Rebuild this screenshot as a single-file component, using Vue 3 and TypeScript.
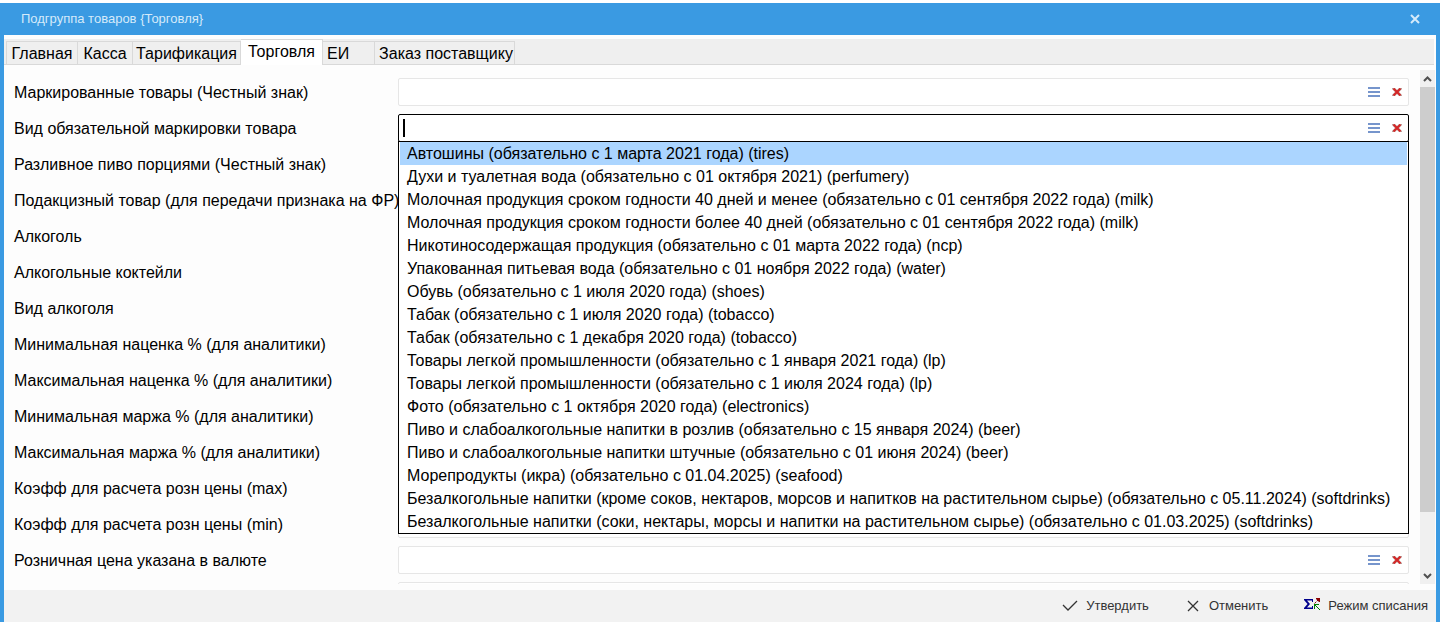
<script setup lang="ts">
import { computed, nextTick, onMounted, ref } from 'vue'

interface Field {
  id: string
  label: string
}

const tabs: { name: string; size: string }[] = [
  { name: 'Главная', size: 't-main' },
  { name: 'Касса', size: 't-cash' },
  { name: 'Тарификация', size: 't-tariff' },
  { name: 'Торговля', size: 't-trade' },
  { name: 'ЕИ', size: 't-unit' },
  { name: 'Заказ поставщику', size: 't-order' },
]
const activeTab = ref('Торговля')

const labels: string[] = [
  'Маркированные товары (Честный знак)',
  'Вид обязательной маркировки товара',
  'Разливное пиво порциями (Честный знак)',
  'Подакцизный товар (для передачи признака на ФР)',
  'Алкоголь',
  'Алкогольные коктейли',
  'Вид алкоголя',
  'Минимальная наценка % (для аналитики)',
  'Максимальная наценка % (для аналитики)',
  'Минимальная маржа % (для аналитики)',
  'Максимальная маржа % (для аналитики)',
  'Коэфф для расчета розн цены (max)',
  'Коэфф для расчета розн цены (min)',
  'Розничная цена указана в валюте',
  '',
]
const fields = computed<Field[]>(() => labels.map((label, i) => ({ id: `field-${i}`, label })))
const values = ref<string[]>(labels.map(() => ''))
const openIndex = ref(1)
const highlighted = ref(0)

const options: string[] = [
  'Автошины (обязательно с 1 марта 2021 года) (tires)',
  'Духи и туалетная вода (обязательно с 01 октября 2021) (perfumery)',
  'Молочная продукция сроком годности 40 дней и менее (обязательно с 01 сентября 2022 года) (milk)',
  'Молочная продукция сроком годности более 40 дней (обязательно с 01 сентября 2022 года) (milk)',
  'Никотиносодержащая продукция (обязательно с 01 марта 2022 года) (ncp)',
  'Упакованная питьевая вода (обязательно с 01 ноября 2022 года) (water)',
  'Обувь (обязательно с 1 июля 2020 года) (shoes)',
  'Табак (обязательно с 1 июля 2020 года) (tobacco)',
  'Табак (обязательно с 1 декабря 2020 года) (tobacco)',
  'Товары легкой промышленности (обязательно с 1 января 2021 года) (lp)',
  'Товары легкой промышленности (обязательно с 1 июля 2024 года) (lp)',
  'Фото (обязательно с 1 октября 2020 года) (electronics)',
  'Пиво и слабоалкогольные напитки в розлив (обязательно с 15 января 2024) (beer)',
  'Пиво и слабоалкогольные напитки штучные (обязательно с 01 июня 2024) (beer)',
  'Морепродукты (икра) (обязательно с 01.04.2025) (seafood)',
  'Безалкогольные напитки (кроме соков, нектаров, морсов и напитков на растительном сырье) (обязательно с 05.11.2024) (softdrinks)',
  'Безалкогольные напитки (соки, нектары, морсы и напитки на растительном сырье) (обязательно с 01.03.2025) (softdrinks)',
]

function choose(index: number) {
  values.value[openIndex.value] = options[index]
  openIndex.value = -1
}

onMounted(async () => {
  await nextTick()
  document.getElementById('field-1')?.focus()
})
</script>

<template>
  <div class="window">
    <header class="titlebar">
      <h1 class="title">Подгруппа товаров {Торговля}</h1>
      <button class="close" type="button" aria-label="Закрыть">
        <svg width="10" height="10" viewBox="0 0 10 10"><path d="M1 1l8 8M9 1l-8 8" /></svg>
      </button>
    </header>

    <nav class="tabs" role="tablist">
      <button
        v-for="tab in tabs"
        :key="tab.name"
        type="button"
        role="tab"
        class="tab"
        :class="[tab.size, { active: tab.name === activeTab }]"
        :aria-selected="tab.name === activeTab"
        @click="activeTab = tab.name"
      >{{ tab.name }}</button>
    </nav>

    <main class="content">
      <form class="form" @submit.prevent>
        <div v-for="(field, i) in fields" :key="field.id" class="row">
          <label class="label" :for="field.id">{{ field.label }}</label>
          <div class="field" :class="{ open: i === openIndex }">
            <input :id="field.id" v-model="values[i]" class="input" type="text" autocomplete="off" />
            <span v-if="i === openIndex" class="caret"></span>
            <button class="icon" type="button" aria-label="Выбрать из списка" @click="openIndex = i">
              <svg width="12" height="10" viewBox="0 0 12 10">
                <path d="M0 1h12M0 5h12M0 9h12" stroke="#7695cc" stroke-width="2" />
              </svg>
            </button>
            <button class="icon" type="button" aria-label="Очистить" @click="values[i] = ''">
              <svg width="10" height="8" viewBox="0 0 10 8">
                <path d="M0 0h3l2 2 2-2h3v1L7 4l3 3v1H7L5 6 3 8H0V7l3-3-3-3z" fill="#b9a09c" />
                <path d="M1.500 0.500l3.500 3.500 3.500-3.500M1.500 7.500L5 4l3.500 3.500" stroke="#d42626" stroke-width="2" fill="none" />
              </svg>
            </button>
            <ul v-if="i === openIndex" class="menu" role="listbox">
              <li
                v-for="(option, n) in options"
                :key="option"
                class="option"
                :class="{ selected: n === highlighted }"
                role="option"
                :aria-selected="n === highlighted"
                @mouseenter="highlighted = n"
                @click="choose(n)"
              >{{ option }}</li>
            </ul>
          </div>
        </div>
      </form>
      <div class="scroll">
        <svg class="arrow" width="15" height="17" viewBox="0 0 15 17"><path d="M4 11l3.500-3.500L11 11" /></svg>
        <div class="thumb"></div>
        <svg class="arrow" width="15" height="17" viewBox="0 0 15 17"><path d="M4 7l3.500 3.500L11 7" /></svg>
      </div>
    </main>

    <footer class="footer">
      <button class="action" type="button">
        <svg width="16" height="16" viewBox="0 0 16 16"><path d="M1 7l5 5L15 3" stroke="#333" stroke-width="1.300" fill="none" /></svg>
        Утвердить
      </button>
      <button class="action" type="button">
        <svg width="16" height="16" viewBox="0 0 16 16"><path d="M3 3l10 10M13 3L3 13" stroke="#333" stroke-width="1.300" fill="none" /></svg>
        Отменить
      </button>
      <button class="action" type="button">
        <svg width="16" height="16" viewBox="0 0 16 16">
          <path d="M0 1h9v3H8V2.500H3L6 6 3 9.500h5V8h1v3H0v-1l3.500-4L0 2z" fill="#00008b" />
          <path d="M10.500 5.500l4-4" stroke="#8b0000" stroke-dasharray="2 1" fill="none" />
          <path d="M12 0h4v4h-1l-3-3z" fill="#8b0000" />
          <path d="M11 7l5 5" stroke="#008000" fill="none" />
          <path d="M10 6h5v1h-3l-1 1v3h-1z" fill="#008000" />
        </svg>
        Режим списания
      </button>
    </footer>
  </div>
</template>

<style>
body {
  background: #fff;
  overflow: hidden;
}
</style>

<style scoped>
.window {
  box-sizing: border-box;
  display: flex;
  flex-direction: column;
  height: calc(100vh - 3px);
  margin: 3px 1px 0 0;
  border: solid #3a9ae2;
  border-width: 0 4px;
  background: #fdfdfd;
  color: #000;
  font: 16px/20px "Liberation Sans", Arial, sans-serif;
}
button {
  margin: 0;
  padding: 0;
  border: 0;
  background: none;
  color: inherit;
  font: inherit;
}
svg {
  display: block;
  flex: none;
}
.titlebar {
  display: flex;
  align-items: center;
  justify-content: space-between;
  height: 32px;
  flex: none;
  padding: 0 16px 0 17px;
  background: #3a9ae2;
  color: #d5eafa;
}
.title {
  margin: 0;
  font-size: 13px;
  font-weight: 400;
  line-height: 16px;
}
.close path {
  stroke: #d5eafa;
  stroke-width: 2;
}
.tabs {
  display: flex;
  align-items: flex-end;
  flex: none;
  height: 26px;
  margin: 4px 2px 0 0;
  padding-left: 2px;
  background: #efefef;
  box-shadow: inset 0 -1px #d9d9d9;
}
.tab {
  box-sizing: border-box;
  height: 24px;
  padding-top: 2px;
  border: 1px solid #d9d9d9;
  border-left-width: 0;
  white-space: nowrap;
}
.t-main {
  width: 72px;
  border-left-width: 1px;
}
.t-cash { width: 55px; }
.t-tariff { width: 108px; }
.t-trade { width: 82px; }
.t-unit {
  width: 52px;
  padding-left: 4px;
  text-align: left;
}
.t-order {
  width: 140px;
  padding-left: 3px;
}
.tab.active {
  height: 26px;
  padding: 0 0 2px;
  border-bottom: 0;
  background: #fff;
}
.content {
  display: flex;
  flex: 1;
  min-height: 0;
  padding: 5px 1px 6px 0;
}
.form {
  flex: 1;
  min-width: 0;
  padding: 8px 11px 0 10px;
  overflow: hidden;
}
.row {
  display: grid;
  grid-template-columns: 384px 1fr;
  align-items: center;
  height: 28px;
  margin-bottom: 8px;
}
.label {
  padding-top: 2px;
  white-space: nowrap;
}
.field {
  position: relative;
  display: flex;
  align-items: center;
  box-sizing: border-box;
  height: 28px;
  padding-right: 5px;
  border: 1px solid #e6e6e6;
  border-radius: 2px;
  background: #fff;
}
.field.open {
  border-color: #000;
}
.input {
  flex: 1;
  min-width: 0;
  height: 24px;
  padding: 0 5px;
  border: 0;
  outline: 0;
  background: none;
  font: inherit;
  caret-color: transparent;
}
.caret {
  position: absolute;
  top: 4px;
  left: 4px;
  width: 2px;
  height: 18px;
  background: #000;
}
.icon {
  display: flex;
  align-items: center;
  justify-content: center;
  width: 12px;
  height: 16px;
}
.icon + .icon {
  margin-left: 11px;
}
.menu {
  position: absolute;
  z-index: 2;
  top: 26px;
  left: -1px;
  right: -1px;
  margin: 0;
  padding: 0 1px;
  border: 1px solid #000;
  background: #fff;
  list-style: none;
}
.option {
  padding-left: 7px;
  line-height: 23px;
  white-space: nowrap;
}
.option.selected {
  background: #abd5ff;
}
.scroll {
  display: flex;
  flex-direction: column;
  flex: none;
  width: 15px;
  background: #f0f0f0;
}
.thumb {
  flex: 0 1 425px;
  margin-bottom: auto;
  background: #cdcdcd;
}
.arrow path {
  fill: none;
  stroke: #505050;
  stroke-width: 2;
}
.footer {
  display: flex;
  align-items: center;
  justify-content: flex-end;
  flex: none;
  gap: 36px;
  height: 32px;
  padding-right: 8px;
  background: #f2f2f2;
  color: #333;
  font-size: 13px;
}
.action {
  display: flex;
  align-items: center;
  gap: 8px;
}
</style>
